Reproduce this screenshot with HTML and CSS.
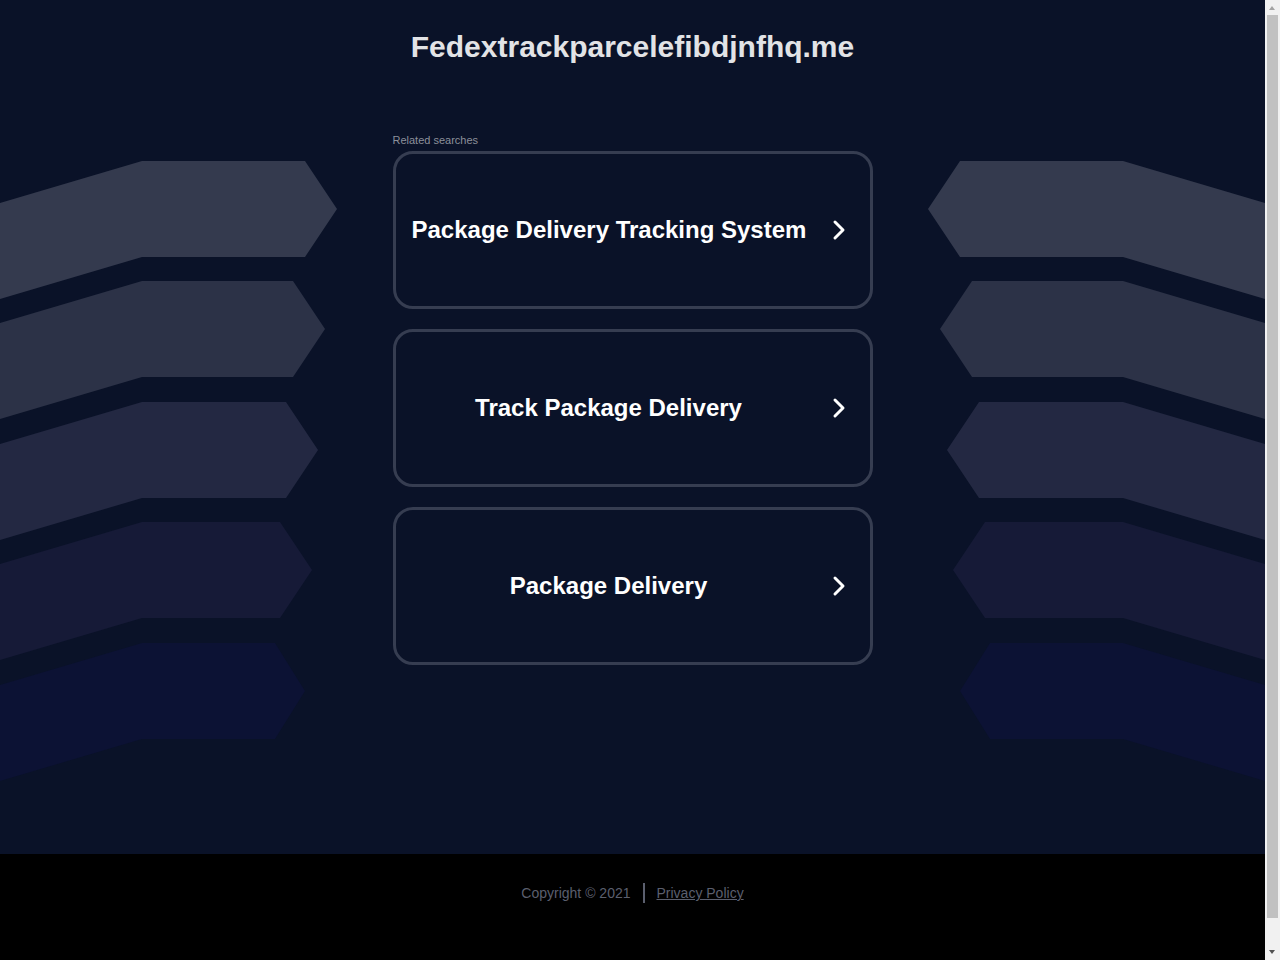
FILE: index.html
```html
<!DOCTYPE html>
<html lang="en">
<head>
<meta charset="utf-8">
<title>Fedextrackparcelefibdjnfhq.me</title>
<link rel="stylesheet" href="styles.css">
</head>
<body>
<div class="wrap">
  <div class="page">
    <svg class="bg" viewBox="0 0 1265 854" width="1265" height="854" aria-hidden="true">
      <g>
        <polygon fill="#343a4e" points="0,203 142,161 305,161 337,209 305,257 142,257 0,299"/>
        <polygon fill="#2c3247" points="0,323 142,281 293,281 325,329 293,377 142,377 0,419"/>
        <polygon fill="#232842" points="0,444 142,402 286,402 318,450 286,498 142,498 0,540"/>
        <polygon fill="#161a37" points="0,564 142,522 280,522 312,570 280,618 142,618 0,660"/>
        <polygon fill="#0c1234" points="0,685 142,643 275,643 305,691 275,739 142,739 0,781"/>
      </g>
      <g transform="translate(1265,0) scale(-1,1)">
        <polygon fill="#343a4e" points="0,203 142,161 305,161 337,209 305,257 142,257 0,299"/>
        <polygon fill="#2c3247" points="0,323 142,281 293,281 325,329 293,377 142,377 0,419"/>
        <polygon fill="#232842" points="0,444 142,402 286,402 318,450 286,498 142,498 0,540"/>
        <polygon fill="#161a37" points="0,564 142,522 280,522 312,570 280,618 142,618 0,660"/>
        <polygon fill="#0c1234" points="0,685 142,643 275,643 305,691 275,739 142,739 0,781"/>
      </g>
    </svg>
    <main class="content">
      <h1 class="title">Fedextrackparcelefibdjnfhq.me</h1>
      <div class="label">Related searches</div>
      <div class="cards">
        <a class="card" href="#">
          <span class="card-text">Package Delivery Tracking System</span>
          <svg class="chev" width="14" height="22" viewBox="0 0 14 22"><polyline points="3,3 11,11 3,19" fill="none" stroke="#fff" stroke-width="3" stroke-linecap="round" stroke-linejoin="round"/></svg>
        </a>
        <a class="card" href="#">
          <span class="card-text">Track Package Delivery</span>
          <svg class="chev" width="14" height="22" viewBox="0 0 14 22"><polyline points="3,3 11,11 3,19" fill="none" stroke="#fff" stroke-width="3" stroke-linecap="round" stroke-linejoin="round"/></svg>
        </a>
        <a class="card" href="#">
          <span class="card-text">Package Delivery</span>
          <svg class="chev" width="14" height="22" viewBox="0 0 14 22"><polyline points="3,3 11,11 3,19" fill="none" stroke="#fff" stroke-width="3" stroke-linecap="round" stroke-linejoin="round"/></svg>
        </a>
      </div>
    </main>
  </div>
  <footer class="footer">
    <span class="copy">Copyright © 2021</span>
    <span class="sep"></span>
    <a class="privacy" href="#">Privacy Policy</a>
  </footer>
</div>
<div class="scrollbar" aria-hidden="true">
  <span class="sb-up"></span>
  <span class="sb-thumb"></span>
  <span class="sb-down"></span>
</div>
</body>
</html>
```
FILE: styles.css
```css
html, body {
  margin: 0;
  padding: 0;
}
body {
  font-family: "Liberation Sans", Arial, sans-serif;
  background: #000;
}
.wrap {
  width: 1265px;
}
.page {
  position: relative;
  height: 854px;
  background: #0a1228;
  overflow: hidden;
}
.bg {
  position: absolute;
  left: 0;
  top: 0;
  display: block;
}
.content {
  position: relative;
  width: 480px;
  margin: 0 auto;
  padding-top: 30px;
}
.title {
  margin: 0 -100px;
  font-size: 30px;
  line-height: 34px;
  font-weight: bold;
  color: #e2e3e6;
  text-align: center;
}
.label {
  margin-top: 70px;
  font-size: 11px;
  line-height: 13px;
  color: #8c909a;
}
.cards {
  margin-top: 4px;
  display: flex;
  flex-direction: column;
  gap: 20px;
}
.card {
  box-sizing: border-box;
  height: 158px;
  border: 3px solid #363d51;
  border-radius: 20px;
  display: flex;
  align-items: center;
  padding: 0 24px 0 16px;
  gap: 26px;
  text-decoration: none;
  color: #fff;
}
.card-text {
  flex: 1;
  text-align: center;
  font-size: 24px;
  font-weight: bold;
  white-space: nowrap;
}
.chev {
  flex: none;
  display: block;
}
.footer {
  box-sizing: border-box;
  height: 136px;
  padding-top: 30px;
  display: flex;
  justify-content: center;
  align-items: flex-start;
  gap: 12px;
  font-size: 14px;
  line-height: 18px;
  background: #000;
  color: #5b5f6e;
}
.sep {
  width: 2px;
  height: 20px;
  margin-top: -1px;
  background: #5b5f6e;
}
.privacy {
  color: #5b5f6e;
  text-decoration: underline;
}
.scrollbar {
  position: fixed;
  top: 0;
  right: 0;
  width: 15px;
  height: 100vh;
  background: #f1f1f1;
}
.sb-thumb {
  position: absolute;
  left: 2px;
  top: 15px;
  width: 11px;
  height: 903px;
  background: #c1c1c1;
}
.sb-up,
.sb-down {
  position: absolute;
  left: 4px;
  width: 0;
  height: 0;
  border-left: 3.5px solid transparent;
  border-right: 3.5px solid transparent;
}
.sb-up {
  top: 6px;
  border-bottom: 4px solid #a3a3a3;
}
.sb-down {
  bottom: 6px;
  border-top: 4px solid #505050;
}
```
